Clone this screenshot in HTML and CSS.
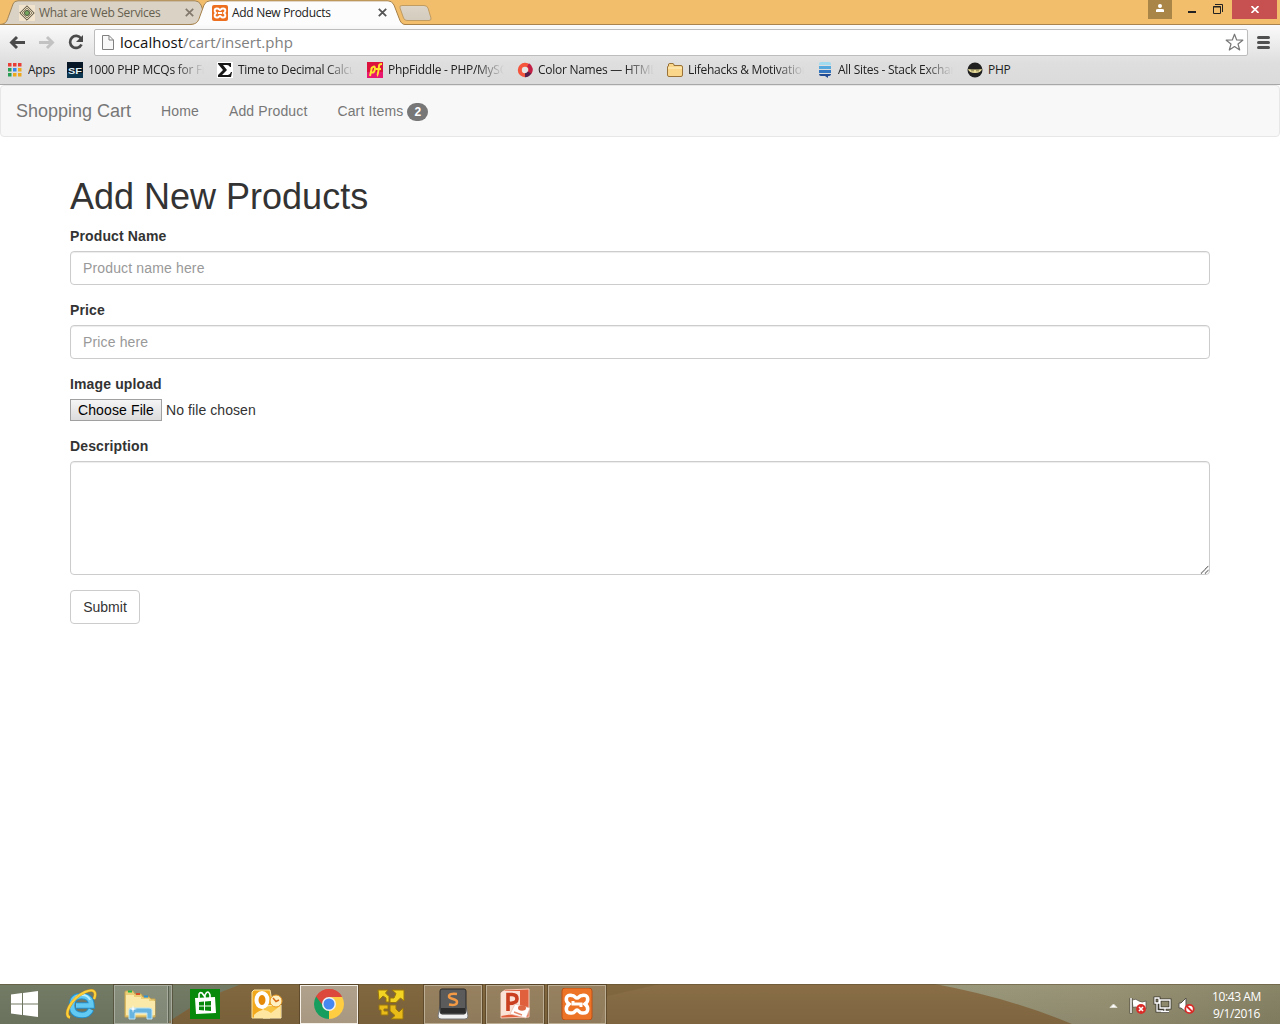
FILE: index.html
```html
<!DOCTYPE html>
<html lang="en">
<head>
<meta charset="utf-8">
<title>Add New Products</title>
<link rel="stylesheet" href="styles.css">
</head>
<body>
<div class="screen">
  <header class="titlebar">
    <svg class="tab-shapes" width="440" height="25" viewBox="0 0 440 25">
      <defs><linearGradient id="newtab" x2="0" y2="1"><stop stop-color="#dcd5c8"/><stop offset="1" stop-color="#d3cbbd"/></linearGradient></defs>
      <path d="M0 24.5C7 24 7 20 9 15L13 4Q14 .8 18 .8H195Q199 .8 201 5L208 24.5Z" fill="#d9d2c5" stroke="#a28455"/>
      <path d="M190 25C197 24 198 22 200 16L204 5Q206 .8 210 .8H388Q392 .8 394 5L399 18Q401 24.500 405 24.500V25Z" fill="#fcfcfc"/>
      <path d="M190 24.500C197 24 198 22 200 16L204 5Q206 .8 210 .8H388Q392 .8 394 5L399 18Q401 24.500 405 24.500H440" fill="none" stroke="#a68047"/>
      <path d="M402 5.500H424Q427 5.500 428 8L431 18Q431.500 20.500 429 20.500H407Q404.500 20.500 403.500 18L400 8Q399 5.500 402 5.500Z" fill="url(#newtab)" stroke="#c09b62"/>
    </svg>
    <div class="tab tab-back">
      <svg width="16" height="16" viewBox="0 0 16 16"><rect width="16" height="16" fill="#f1e3cc"/><path d="M8 .8 15.200 8 8 15.200 .8 8Z" fill="#ddd2b4" stroke="#584f40"/><path d="M8 3 13 8 8 13 3 8Z" fill="none" stroke="#8d8268"/><circle cx="8" cy="8" r="2.500" fill="#74a85e" stroke="#4d5440"/></svg>
      <span class="tab-title t-web">What are Web Services</span>
      <svg class="close" width="9" height="9" viewBox="0 0 9 9"><path d="M.8.800 8.200 8.200M8.200.800.800 8.200" stroke="#82796c" stroke-width="1.700"/></svg>
    </div>
    <div class="tab tab-front">
      <svg width="16" height="16" viewBox="0 0 32 32"><rect width="32" height="32" rx="4" fill="#ed6f20"/><path d="M11 7C4 6 4 13 8 16 4 19 4 26 11 25 14 25 14 22 16 22S18 25 21 25C28 26 28 19 24 16 28 13 28 6 21 7 18 7 18 10 16 10S14 7 11 7Z" fill="none" stroke="#fff" stroke-width="4"/><path d="M12 16H20" stroke="#fff" stroke-width="4"/></svg>
      <span class="tab-title t-add">Add New Products</span>
      <svg class="close" width="9" height="9" viewBox="0 0 9 9"><path d="M.8.800 8.200 8.200M8.200.800.800 8.200" stroke="#555" stroke-width="1.800"/></svg>
    </div>
    <div class="window-controls">
      <span class="user"><svg width="8" height="8" viewBox="0 0 8 8"><circle cx="4" cy="2" r="2" fill="#fff"/><path d="M0 8V6Q0 5 2 5H6Q8 5 8 6V8Z" fill="#fff"/></svg></span>
      <span class="minimize"></span>
      <svg class="restore" width="10" height="10" viewBox="0 0 10 10"><path d="M.5 2.500H7.500V9.500H.500ZM2 .500H9.500V8M0 3H8" fill="none" stroke="#222"/></svg>
      <span class="window-close"><svg width="8" height="7" viewBox="0 0 8 7"><path d="M.500 0 7.500 7M7.500 0 .500 7" stroke="#fff" stroke-width="1.700"/></svg></span>
    </div>
  </header>

  <div class="toolbar">
    <div class="address-row">
      <svg class="nav-icons" width="94" height="28" viewBox="0 0 94 28">
        <path d="M25 13.500H12M17 8 11.500 13.500 17 19" fill="none" stroke="#4b4b4b" stroke-width="2.900"/>
        <path d="M39 13.500H52M47 8 52.500 13.500 47 19" fill="none" stroke="#c2c2c2" stroke-width="2.900"/>
        <path d="M81 9.500A6 6 0 1 0 81.500 15.500" fill="none" stroke="#4b4b4b" stroke-width="2.700"/><path d="M83 6V13H76Z" fill="#4b4b4b"/>
      </svg>
      <div class="address">
        <svg width="12" height="15" viewBox="0 0 12 15"><path d="M.500.500H7L11.500 5V14.500H.500ZM7 .500V5H11.500" fill="#f8f8f8" stroke="#808080"/></svg>
        <span class="url">localhost<i>/cart/insert.php</i></span>
        <svg class="star" width="19" height="19" viewBox="0 0 19 19"><path d="M9.500 1.200 11.700 7 17.800 7.200 13 11 14.700 17 9.500 13.600 4.300 17 6 11 1.200 7.200 7.300 7Z" fill="#fff" stroke="#787878" stroke-width="1.200" stroke-linejoin="round"/></svg>
      </div>
      <svg class="menu" width="13" height="13" viewBox="0 0 13 13"><path d="M1.500 1.500H11.500M1.500 6.500H11.500M1.500 11.500H11.500" stroke="#505050" stroke-width="3" stroke-linecap="round"/></svg>
    </div>
    <nav class="bookmarks">
      <a class="bm bm-apps"><svg width="14" height="14" viewBox="0 0 14 14"><path d="M0 0h3.500v3.500H0zM5 0h3.500v3.500H5zM10 0h3.500v3.500h-3.500z" fill="#e83e35"/><path d="M0 5h3.500v3.500H0zM0 10h3.500v3.500H0z" fill="#279e53"/><path d="M5 5h3.500v3.500H5z" fill="#3487ee"/><path d="M10 5h3.500v3.500h-3.500zM5 10h3.500v3.500H5zM10 10h3.500v3.500h-3.500z" fill="#eda91d"/></svg><span>Apps</span></a>
      <a class="bm bm-mcq"><svg width="16" height="16" viewBox="0 0 16 16"><rect width="16" height="16" fill="#071725"/><path d="M0 11H16V16H0Z" fill="#0d3750"/><text x="1" y="11.500" textLength="14" lengthAdjust="spacingAndGlyphs" class="sf">SF</text></svg><span class="fade">1000 PHP MCQs for Fr</span></a>
      <a class="bm bm-time"><svg width="16" height="16" viewBox="0 0 16 16"><rect width="16" height="16" fill="#fff"/><path d="M1 1H14V5H13Q12 3 10 3H6L10 8 5 13H11Q13 13 14 10H15L14 15H1V13L6 8 1 2Z" fill="#171717"/></svg><span class="fade">Time to Decimal Calcu</span></a>
      <a class="bm bm-fiddle"><svg width="16" height="16" viewBox="0 0 16 16"><rect width="16" height="16" fill="#dc123d"/><path d="M0 10H16V16H0Z" fill="#e91770"/><path d="M3 14 5 5M4 7Q8 2 8 7 7 12 4 10M10 14Q11 14 12 4 12 2 15 2M9 7H14" fill="none" stroke="#ffe42b" stroke-width="2"/></svg><span class="fade">PhpFiddle - PHP/MySQ</span></a>
      <a class="bm bm-color"><svg width="16" height="16" viewBox="0 0 16 16"><circle cx="8" cy="8" r="5.200" fill="#e4e4e4" stroke="#f4553c" stroke-width="4"/><path d="M11 3A5.200 5.200 0 0 1 12.500 11" fill="none" stroke="#c21f46" stroke-width="4"/><path d="M12.500 10.500A5.200 5.200 0 0 1 8 13.200" fill="none" stroke="#54204d" stroke-width="4"/></svg><span class="fade">Color Names — HTML</span></a>
      <a class="bm bm-life"><svg width="16" height="14" viewBox="0 0 16 14"><path d="M1.500 3V1Q2 .500 3 .500H6Q7 .500 7 2.500H14Q15.500 2.500 15.500 4V12Q15.500 13.500 14 13.500H2Q.500 13.500.500 12V4Q.500 3 1.500 3Z" fill="#fad68a" stroke="#987239"/><path d="M1 5H15" stroke="#fff0c4"/></svg><span class="fade">Lifehacks &amp; Motivation</span></a>
      <a class="bm bm-stack"><svg width="14" height="16" viewBox="0 0 14 16"><path d="M1 3V2Q1 0 3 0H11Q13 0 13 2V3Z" fill="#a0dbef"/><path d="M1 4H13V7H1Z" fill="#55a9dc"/><path d="M1 8H13V11H1Z" fill="#3475bf"/><path d="M1 12H13Q13 14 10 14V16L7 14H3Q1 14 1 12Z" fill="#214b92"/></svg><span class="fade">All Sites - Stack Exchan</span></a>
      <a class="bm bm-php"><svg width="16" height="16" viewBox="0 0 16 16"><circle cx="8" cy="8" r="7.500" fill="#202020"/><path d="M1 7Q8 8 15 7 14 11 8 11 2 11 1 7Z" fill="#e8dc9a"/><path d="M4 8.800H7M9 8.800H12" stroke="#8a8050"/></svg><span>PHP</span></a>
    </nav>
  </div>

  <main class="page">
    <nav class="navbar">
      <a class="brand">Shopping Cart</a>
      <a>Home</a>
      <a>Add Product</a>
      <a>Cart Items <span class="badge">2</span></a>
    </nav>
    <form class="container">
      <h1>Add New Products</h1>
      <div class="group"><label for="name">Product Name</label><input id="name" class="control" type="text" placeholder="Product name here"></div>
      <div class="group"><label for="price">Price</label><input id="price" class="control" type="text" placeholder="Price here"></div>
      <div class="group"><label>Image upload</label><div class="file"><button type="button" class="choose">Choose File</button><span>No file chosen</span></div></div>
      <div class="group"><label for="desc">Description</label><div class="area"><textarea id="desc" class="control"></textarea><svg class="grip" width="9" height="9" viewBox="0 0 9 9"><path d="M1 8.500 8.500 1M5 8.500 8.500 5" stroke="#555" stroke-width="1.100" stroke-dasharray="1.100 .4"/></svg></div></div>
      <button type="button" class="submit">Submit</button>
    </form>
  </main>

  <footer class="taskbar">
    <svg class="wallpaper" width="1280" height="40" viewBox="0 0 1280 40" preserveAspectRatio="none">
      <defs><linearGradient id="shade" x2="0" y2="1"><stop stop-color="#000" stop-opacity="0"/><stop offset="1" stop-color="#000" stop-opacity=".08"/></linearGradient>
      <linearGradient id="right"><stop stop-color="#9a997d"/><stop offset=".5" stop-color="#999375"/><stop offset="1" stop-color="#898567"/></linearGradient></defs>
      <rect width="1280" height="40" fill="#737b65"/>
      <path d="M166 40Q200 15 242 0H1280V40Z" fill="#896e46"/>
      <path d="M242 0H660L607 12 600 40H166Q200 15 242 0Z" fill="#82683f"/>
      <path d="M935 0Q1010 14 1072 40H1280V0Z" fill="url(#right)"/>
      <rect width="1280" height="40" fill="url(#shade)"/><path d="M0 .500H1280" stroke="#5c4c2e" stroke-opacity=".5"/>
    </svg>
    <div class="start"><svg width="28" height="26" viewBox="0 0 28 26"><path d="M0 3.500 11 2V12.500H0ZM12 1.900 27 0V12.500H12ZM0 13.500H11V24L0 22.500ZM12 13.500H27V26L12 24.100Z" fill="#fff"/></svg></div>
    <div class="task"><svg width="32" height="32" viewBox="0 0 32 32"><path d="M26 21.500Q23.500 27 17 27 7 27 7 17.500 7 8 16.500 8 26 8 26.500 17.500H11" fill="none" stroke="#258fca" stroke-width="6.500"/><path d="M26 21.500Q23.500 27 17 27 7 27 7 17.500 7 8 16.500 8 26 8 26.500 17.500H11" fill="none" stroke="#62c9f2" stroke-width="4.500"/><path d="M8 13Q11 7 17 7 23 7 25 12" fill="none" stroke="#b7efff" stroke-width="1.800"/><path d="M5 29.500C-2 28 5 11 20 4 29 0 32 4 29 11" fill="none" stroke="#d7991d" stroke-width="3"/><path d="M5 29.500C-2 28 5 11 20 4 29 0 32 4 29 11" fill="none" stroke="#fbd23c" stroke-width="2"/></svg></div>
    <div class="task stacked"><svg width="32" height="30" viewBox="0 0 32 30"><path d="M1 25V2Q1 1 2 1H9L11 4H17L19 7H25L27 9H31V27H1Z" fill="#ebce76" stroke="#c9a650"/><path d="M2 5H10V7H17V9H25V11H31V25H2Z" fill="#fae9a8"/><path d="M4 1.500H8" stroke="#25b149" stroke-width="2"/><path d="M12 4H16" stroke="#d6502c" stroke-width="2"/><path d="M20 6.500H24" stroke="#2b91d6" stroke-width="2"/><path d="M5 29V20Q5 18 8 18H25Q28 18 28 20V29H23V23H11V29Z" fill="#68b4e0" stroke="#bce5f8"/><path d="M9 15 9.700 18.300 13 19 9.700 19.700 9 23 8.300 19.700 5 19 8.300 18.300Z" fill="#fff"/></svg></div>
    <div class="task"><svg width="30" height="30" viewBox="0 0 30 30"><path d="M0 0H30V30H0Z" fill="#078a0b"/><path d="M5 9 25 8 26 24 6 25Z" fill="#fff"/><path d="M9 9V5Q10 3 12 4L15 8M15 9V6Q18 0 20 6V9" fill="none" stroke="#fff" stroke-width="1.600"/><path d="M9 13 14 12.500V16.500H9ZM15 12.400 21 12V16.500H15ZM9 17.500H14V21.500L9 21ZM15 17.500H21V22L15 21.500Z" fill="#078a0b"/></svg></div>
    <div class="task"><svg width="32" height="32" viewBox="0 0 32 32"><path d="M3 2H19L21 13 19 30H1V4Z" fill="#f2a91e" stroke="#fce5a3"/><path d="M12 18 30 17 30 30 12 30Z" fill="#f7c444" stroke="#fff1c4"/><ellipse cx="11" cy="12" rx="5.500" ry="7" fill="#e58a08" stroke="#fff" stroke-width="4"/><path d="M3 27Q12 18 20 25L29 18V30H3Z" fill="#ffe6a0"/><circle cx="25" cy="13" r="6" fill="#fff0c4" stroke="#e99820"/><path d="M22 10 25 13.500 28 12" fill="none" stroke="#d66c17" stroke-width="1.500"/></svg></div>
    <div class="task active"><svg width="30" height="30" viewBox="0 0 30 30"><path d="M15 15 2.010 7.500A15 15 0 0 1 27.990 7.500Z" fill="#dc483b"/><path d="M15 15V30A15 15 0 0 1 2.010 7.500Z" fill="#179e5e"/><path d="M15 15 27.990 7.500A15 15 0 0 1 15 30Z" fill="#fecd42"/><path d="M15 8H28L21 19 15 30 19 19Z" fill="#fecd42"/><path d="M2 7.500 9 19 15 22 15 8 8 12Z" fill="#179e5e"/><path d="M2 7.500Q7 0 15 0 24 0 28 8H15Q9 9 8.500 16Z" fill="#dc483b"/><circle cx="15" cy="15" r="7" fill="#f1f1f1"/><circle cx="15" cy="15" r="5.500" fill="#4688ef"/></svg></div>
    <div class="task"><svg width="30" height="32" viewBox="0 0 30 32"><path d="M2 2H12L9.500 5 13 8.500V14H10V10L7 8 3 12ZM16 2H28V13L24.500 10 20 14.500H14V10H18L20 5.500Z" fill="#f4d422" stroke="#9a770d"/><path d="M3 17H12V21H8V23H12V27H5V22H3ZM14 17H20V21L23 24 27 20V31H15L19 27.500 14 23Z" fill="#e9bb18" stroke="#9a770d"/></svg></div>
    <div class="task open"><svg width="32" height="32" viewBox="0 0 32 32"><path d="M3 17 1 28Q1 31 4 31H28Q31 31 31 28L29 17Z" fill="#f1f1f1" stroke="#777"/><path d="M5 1H27Q29 1 29 3V23Q29 26 27 26H5Q3 26 3 23V3Q3 1 5 1Z" fill="#5b5b5b" stroke="#292929"/><path d="M4 20H28V25H4Z" fill="#2c2c2c"/><path d="M20 6Q12 5 12 8.500 12 10 16 11 20 12 20 14 20 18 12 16.500" fill="none" stroke="#f49a44" stroke-width="2.500"/></svg></div>
    <div class="task open"><svg width="30" height="32" viewBox="0 0 30 32"><path d="M5 2 29 1V29L1 30V5Z" fill="#e0603e" stroke="#f7c6b3"/><path d="M3 3H20V25L1 28V5Z" fill="#fbe2d6"/><path d="M8 23V6.500H12Q17 6.500 17 11 17 15.500 8 15.500" fill="none" stroke="#c93f20" stroke-width="3.600"/><path d="M15 16 30 20 26 30 10 26Z" fill="#fff" stroke="#e5b8a8" stroke-width=".7"/><ellipse cx="22" cy="20" rx="4" ry="2.800" fill="#df6844"/><path d="M14 24 22 27" stroke="#e88b6c" stroke-width="1.500"/></svg></div>
    <div class="task open"><svg width="32" height="32" viewBox="0 0 32 32"><rect x="1" width="30" height="32" rx="3" fill="#ed7427" stroke="#ba5116"/><path d="M11 7.500C4 6 4 13 8 16 4 19 4 26 11 25 14 25 14 22 16 22S18 25 21 25C28 26 28 19 24 16 28 13 28 6 21 7.500 18 7.500 18 10 16 10S14 7.500 11 7.500Z" fill="none" stroke="#fff" stroke-width="3.500"/><path d="M12 13V16H20V19" fill="none" stroke="#fff" stroke-width="3"/></svg></div>
    <div class="tray">
      <svg width="86" height="20" viewBox="0 0 86 20">
        <path d="M1 11.500 4.500 8 8 11.500Z" fill="#fff" stroke="#dedbd0"/>
        <path d="M23 4Q27 2 30 5 33 7 37 5V13Q32 14 29 11.500 26 10.500 24 11.500Z" fill="#fff" stroke="#5a574b" stroke-width=".8"/><path d="M22 2V17.500" stroke="#4b483c" stroke-width="3"/><path d="M22 2V17" stroke="#fff" stroke-width="1.500"/><circle cx="32" cy="13" r="4.900" fill="#d92b27"/><path d="M30 11 34 15M34 11 30 15" stroke="#fff" stroke-width="1.600"/>
        <path d="M51 4H61V12H51ZM56 12V15M52 15.500H60M46 2H50V7H46ZM48 7V15H54" fill="none" stroke="#3d3a31" stroke-width="3"/><path d="M51 4H61V12H51ZM56 12V15M52 15.500H60M46 2H50V7H46ZM48 7V15H54" fill="none" stroke="#fff" stroke-width="1.300"/>
        <path d="M70 7H72L77 2V16L72 12H70Z" fill="#fff" stroke="#56534a"/><circle cx="80.500" cy="13" r="4.200" fill="#fff" stroke="#d92b27" stroke-width="1.800"/><path d="M77.500 10 83.500 16" stroke="#d92b27" stroke-width="1.800"/>
      </svg>
      <div class="clock"><span class="time">10:43 AM</span><span class="date">9/1/2016</span></div>
    </div>
  </footer>
</div>
</body>
</html>
```
FILE: styles.css
```css
* { box-sizing: border-box; }
body { margin: 0; font: 14px/20px "Liberation Sans", Arial, sans-serif; color: #333; background: #fff; }
svg { display: block; flex: none; }
.screen { width: 1280px; height: 1024px; display: flex; flex-direction: column; overflow: hidden; }

/* Browser frame */
.titlebar { height: 25px; flex: none; display: flex; position: relative; background: #f3be6b; border-bottom: 1px solid #a9834b; font: 12px/16px "Open Sans", sans-serif; }
.tab-shapes { position: absolute; left: 0; top: 0; }
.tab { display: flex; align-items: center; height: 25px; position: relative; }
.tab-back { width: 202px; padding: 0 8px 0 19px; color: #66604f; }
.tab-front { width: 198px; padding: 0 13px 0 10px; color: #222; }
.tab-title { margin-left: 4px; white-space: nowrap; }
.t-web { letter-spacing: -.3px; }
.t-add { letter-spacing: -.3px; }
.close { margin-left: auto; }
.window-controls { margin-left: auto; padding-right: 3px; display: flex; height: 19px; align-items: center; }
.user { width: 24px; height: 19px; background: #a98548; padding: 4px 8px; }
.minimize { width: 8px; height: 2px; background: #222; margin: 4px 17px 0 16px; }
.restore { margin: -1px 9px 0 0; }
.window-close { width: 45px; height: 19px; background: #c75050; padding: 6px 19px; }

.toolbar { height: 60px; flex: none; background: linear-gradient(#fafafa, #dedede 65%, #dbdbdb); border-bottom: 1px solid #a8a8a8; font-family: "Open Sans", sans-serif; color: #222; }
.address-row { display: flex; padding-top: 4px; height: 32px; }
.address { width: 1154px; height: 27px; background: #fff; border: 1px solid #bdbdbd; border-radius: 2px; display: flex; align-items: center; padding: 0 3px 0 7px; }
.url { margin: -2px 0 0 6px; font-size: 15px; letter-spacing: .02px; color: #111; }
.url i { color: #808080; font-style: normal; }
.star { margin-left: auto; }
.menu { margin: 7px 0 0 9px; }
.bookmarks { display: flex; height: 27px; padding-left: 8px; font-size: 12px; letter-spacing: -.27px; }
.bm { display: flex; align-items: center; gap: 5px; height: 25px; white-space: nowrap; flex: none; }
.bm span { overflow: hidden; flex: 1; }
.fade { -webkit-mask-image: linear-gradient(to right, #000 calc(100% - 28px), transparent); mask-image: linear-gradient(to right, #000 calc(100% - 28px), transparent); }
.bm-apps { width: 59px; gap: 6px; }
.bm-mcq { width: 137px; margin-right: 13px; }
.bm-time { width: 137px; margin-right: 13px; }
.bm-fiddle { width: 137px; margin-right: 13px; }
.bm-color { width: 137px; margin-right: 13px; }
.bm-life { width: 137px; margin-right: 14px; }
.bm-stack { width: 135px; margin-right: 14px; gap: 6px; }
.bm-php { width: 60px; }
.sf { font: bold 9px "Liberation Sans", sans-serif; fill: #e2f4fa; letter-spacing: 0; }

/* Page */
.page { flex: 1; background: #fff; }
.navbar { height: 52px; border: 1px solid #e7e7e7; border-radius: 4px; background: #f8f8f8; display: flex; padding-left: 15px; gap: 30px; color: #777; line-height: 20px; letter-spacing: .13px; }
.navbar a { padding-top: 15px; }
.navbar .brand { font-size: 18px; letter-spacing: 0; }
.badge { display: inline-block; width: 21px; padding: 3px 0; font-size: 12px; font-weight: bold; line-height: 12px; letter-spacing: 0; color: #fff; background: #777; border-radius: 10px; vertical-align: middle; text-align: center; }
.container { width: 1140px; margin: 40px auto 0; }
h1 { margin: 0 0 10px; font-size: 36px; line-height: 39px; font-weight: normal; }
.group { margin-bottom: 15px; }
label { display: block; font-weight: bold; margin-bottom: 5px; letter-spacing: .13px; }
.control { display: block; width: 100%; height: 34px; padding: 6px 12px; font: 14px/20px "Liberation Sans", Arial, sans-serif; letter-spacing: .15px; color: #555; border: 1px solid #ccc; border-radius: 4px; box-shadow: inset 0 1px 1px rgba(0, 0, 0, .075); background: #fff; outline: 0; }
.control::placeholder { color: #999; opacity: 1; }
.area { position: relative; }
textarea.control { height: 114px; resize: none; }
.grip { position: absolute; right: 1px; bottom: 1px; }
.file { display: flex; align-items: center; gap: 4px; height: 22px; letter-spacing: .08px; }
.choose { width: 92px; height: 22px; padding: 0; border: 1px solid #a0a0a0; border-radius: 0; background: linear-gradient(#f5f5f5, #dcdcdc); color: #000; font: 14px/18px "Liberation Sans", Arial, sans-serif; letter-spacing: .12px; }
.submit { display: block; width: 70px; height: 34px; padding: 0; border: 1px solid #ccc; border-radius: 4px; background: #fff; color: #333; font: 14px/20px "Liberation Sans", Arial, sans-serif; }

/* Desktop taskbar */
.taskbar { height: 40px; flex: none; display: flex; position: relative; gap: 4px; }
.wallpaper { position: absolute; inset: 0; }
.start { width: 48px; padding: 7px 0 0 11px; position: relative; }
.task { width: 58px; height: 40px; position: relative; display: flex; align-items: center; justify-content: center; border: 1px solid transparent; }
.open, .active, .stacked { height: 39px; margin-top: 1px; border-color: #bcae95; background: rgba(255, 255, 255, .17); outline: 1px solid rgba(60, 45, 25, .45); }
.open svg, .active svg { margin-top: -2px; }
.active { background: linear-gradient(#afa18c, #a89882); border-color: #f3eee6; }
.stacked { border-color: #a7ac9e; padding-right: 6px; background: linear-gradient(to right, rgba(255,255,255,.15) 52px, #a7ac9e 52px, #a7ac9e 53px, #59604f 53px, #59604f 54px, rgba(255,255,255,.12) 54px); }
.tray { position: relative; margin-left: auto; display: flex; padding-right: 19px; }
.tray > svg { margin: 12px 17px 0 0; }
.clock { width: 49px; display: flex; flex-direction: column; align-items: center; padding-top: 4px; color: #fff; font: 12px/17px "Open Sans", sans-serif; letter-spacing: -.4px; white-space: nowrap; }
```
